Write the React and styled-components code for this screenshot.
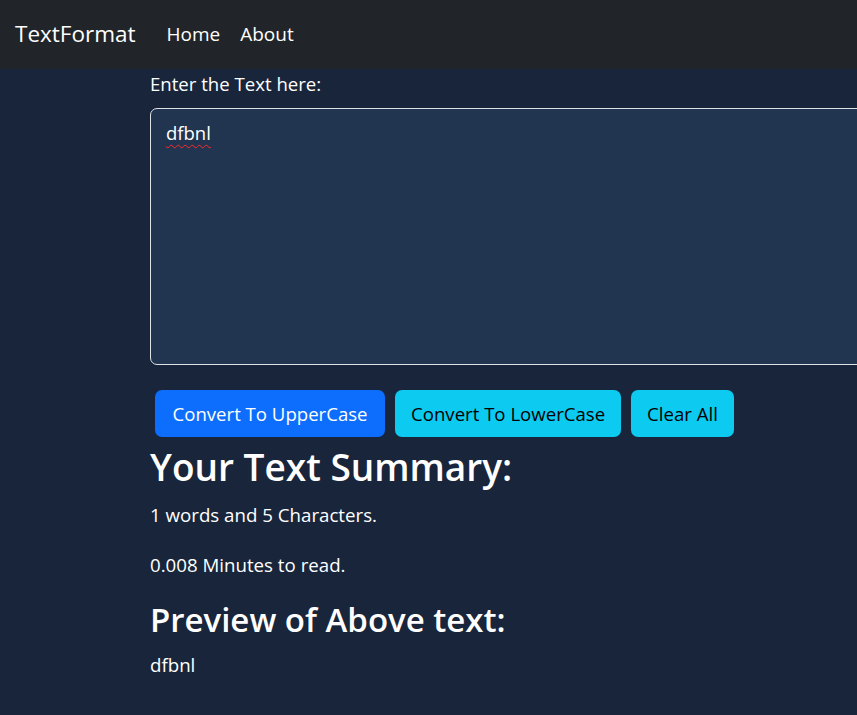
import { useState } from "react";
import styled, { createGlobalStyle } from "styled-components";

const GlobalStyle = createGlobalStyle`
  html, body {
    margin: 0;
    padding: 0;
    background: #19253a;
    overflow-x: hidden;
  }
  body {
    font-family: "Segoe UI", "Open Sans", "Noto Sans", sans-serif;
    color: #ffffff;
    font-size: 20px;
  }
  * { box-sizing: border-box; }
`;

export default function App() {
  const [text, setText] = useState("dfbnl");
  const words = text.split(/\s+/).filter((w) => w.length > 0).length;

  return (
    <Page>
      <GlobalStyle />
      <Navbar>
        <Brand>TextFormat</Brand>
        <NavLinks>
          <NavLink>Home</NavLink>
          <NavLink>About</NavLink>
        </NavLinks>
      </Navbar>
      <Content>
        <Label>Enter the Text here:</Label>
        <Editor
          contentEditable
          suppressContentEditableWarning
          spellCheck={false}
          onInput={(e) => setText(e.currentTarget.textContent)}
        >
          <Misspelled>dfbnl</Misspelled>
        </Editor>
        <ButtonRow>
          <Button $variant="primary" onClick={() => setText(text.toUpperCase())}>
            Convert To UpperCase
          </Button>
          <Button $variant="info" onClick={() => setText(text.toLowerCase())}>
            Convert To LowerCase
          </Button>
          <Button $variant="info" onClick={() => setText("")}>
            Clear All
          </Button>
        </ButtonRow>
        <Heading>Your Text Summary:</Heading>
        <Paragraph>
          {words} words and {text.length} Characters.
        </Paragraph>
        <Paragraph>{(0.008 * words).toFixed(3)} Minutes to read.</Paragraph>
        <SubHeading>Preview of Above text:</SubHeading>
        <Paragraph>{text}</Paragraph>
      </Content>
    </Page>
  );
}

const Page = styled.div`
  min-height: 715px;
  background: #19253a;
`;

const Navbar = styled.nav`
  height: 69px;
  background: #212529;
  display: flex;
  align-items: center;
  padding: 0 15px 2px;
`;

const Brand = styled.a`
  font-size: 22.5px;
  color: #ffffff;
  margin-right: 21px;
  cursor: pointer;
`;

const NavLinks = styled.div`
  display: flex;
  gap: 20px;
  padding-left: 10px;
`;

const NavLink = styled.a`
  font-size: 19px;
  color: #ffffff;
  cursor: pointer;
`;

const Content = styled.main`
  padding-left: 150px;
`;

const Label = styled.label`
  display: block;
  font-size: 18.6px;
  line-height: 30px;
  margin-bottom: 9px;
`;

const Editor = styled.div`
  width: 780px;
  height: 257px;
  background: #213450;
  border: 1px solid #dee2e6;
  border-radius: 7px;
  padding: 9px 15px;
  font-size: 18.5px;
  line-height: 30px;
  color: #ffffff;
  outline: none;
`;

const Misspelled = styled.span`
  text-decoration: underline wavy #ff2a2a;
  text-decoration-thickness: 1px;
  text-underline-offset: 4px;
`;

const ButtonRow = styled.div`
  display: flex;
  gap: 10px;
  margin: 25px 0 0 5px;
`;

const Button = styled.button`
  height: 47px;
  padding: 0 ${(p) => (p.$variant === "primary" ? "17.5px" : "16px")};
  border: none;
  border-radius: 7px;
  font-family: inherit;
  font-size: 18.6px;
  cursor: pointer;
  background: ${(p) => (p.$variant === "primary" ? "#0d6efd" : "#0dcaf0")};
  color: ${(p) => (p.$variant === "primary" ? "#ffffff" : "#000000")};
`;

const Heading = styled.h1`
  font-size: 37px;
  font-weight: 600;
  line-height: 46px;
  margin: 7px 0 10px;
`;

const SubHeading = styled.h2`
  font-size: 33px;
  font-weight: 600;
  line-height: 40px;
  margin: 6px 0 10px;
`;

const Paragraph = styled.p`
  font-size: 18.7px;
  line-height: 30px;
  margin: 0 0 20px;
`;
